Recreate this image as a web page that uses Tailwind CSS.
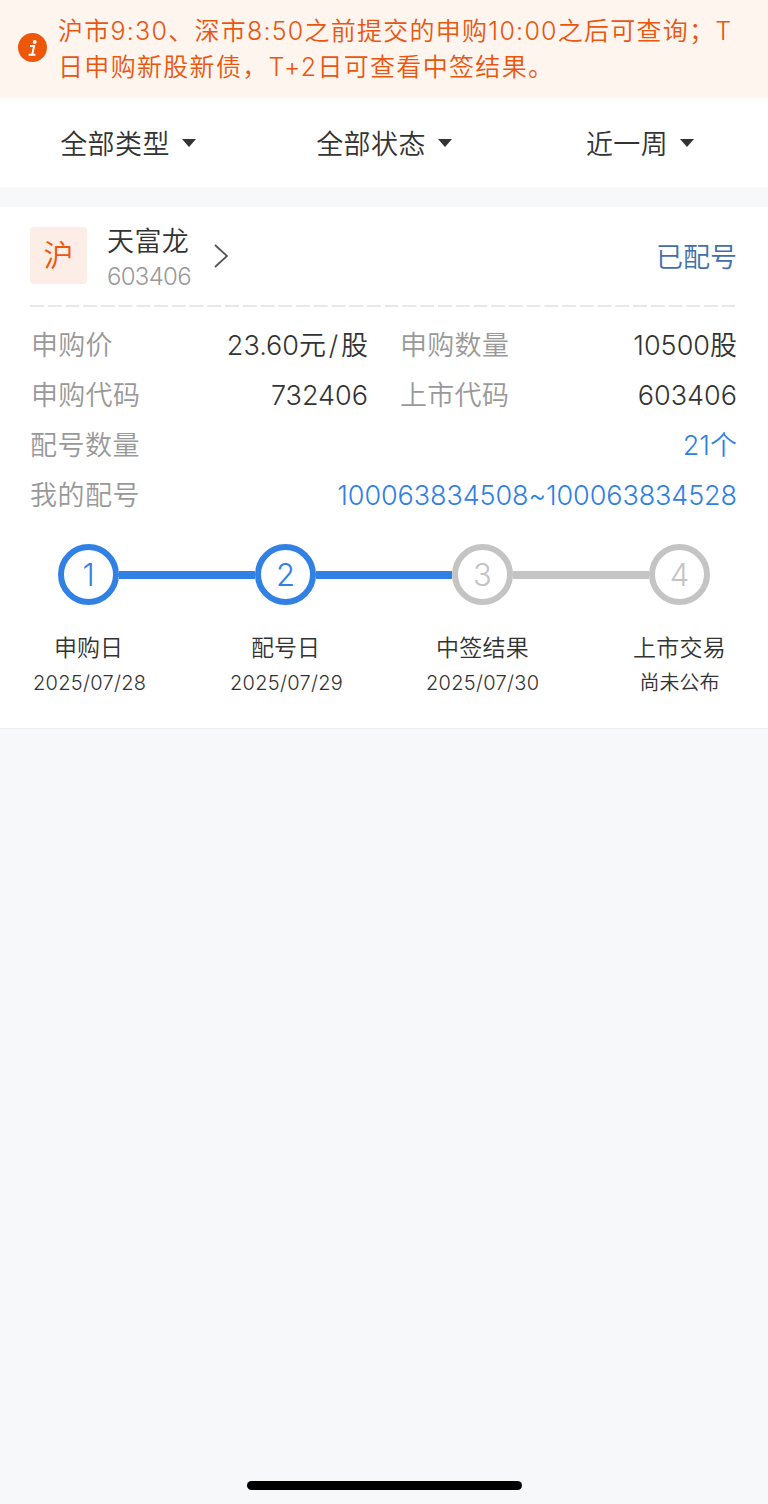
<!DOCTYPE html>
<html lang="zh-CN">
<head>
    <meta charset="UTF-8">
    <meta name="viewport" content="width=device-width, initial-scale=1.0">
    <title>申购查询</title>
    <script src="https://cdn.jsdelivr.net/npm/@tailwindcss/browser@4"></script>
    <style>
        body { font-family: Inter, 'Noto Sans CJK SC', sans-serif; }
    </style>
</head>
<body class="bg-[#f7f8fa] text-[#333333] font-[350] min-h-screen flex flex-col whitespace-nowrap">

    <!-- Aviso -->
    <div class="h-[98px] bg-[#fff5ef] text-[#e9560f] flex pl-[18px]">
        <svg class="w-[29px] h-[29px] mt-[33px] shrink-0" viewBox="0 0 29 29">
            <circle cx="14.5" cy="14.5" r="14.5" fill="#ee560a"/>
            <circle cx="16.7" cy="9" r="2" fill="#fff"/>
            <path d="M12 13h4.1l-1.9 8.6M10.6 21.7h6.8" fill="none" stroke="#fff" stroke-width="2"/>
        </svg>
        <div class="ml-[11px] mt-[13px] text-[25px] leading-[36px]">
            <p class="tracking-[1.25px]">沪市9:30、深市8:50之前提交的申购10:00之后可查询；T</p>
            <p class="tracking-[1.32px]">日申购新股新债，T+2日可查看中签结果。</p>
        </div>
    </div>

    <!-- Filtros -->
    <div class="h-[89px] bg-white grid grid-cols-3 text-[27px] leading-[40px]">
        <button class="flex items-center justify-center gap-3">
            <span class="tracking-[0.4px] pt-1">全部类型</span>
            <svg class="w-[14px] h-2" viewBox="0 0 14 8"><path d="M0 0h14L7 8z" fill="#333"/></svg>
        </button>
        <button class="flex items-center justify-center gap-3">
            <span class="tracking-[0.4px] pt-1">全部状态</span>
            <svg class="w-[14px] h-2" viewBox="0 0 14 8"><path d="M0 0h14L7 8z" fill="#333"/></svg>
        </button>
        <button class="flex items-center justify-center gap-3">
            <span class="tracking-[0.4px] pt-1">近一周</span>
            <svg class="w-[14px] h-2" viewBox="0 0 14 8"><path d="M0 0h14L7 8z" fill="#333"/></svg>
        </button>
    </div>

    <!-- Tarjeta -->
    <div class="mt-5 h-[522px] bg-white border-b border-[#eeeeee]">
        <div class="h-[98px] px-[30px] flex items-center">
            <div class="w-[57px] h-[57px] -mt-0.5 rounded bg-[#fceee6] text-[#ee560a] text-[30px] flex items-center justify-center">沪</div>
            <div class="ml-5 pt-[5px]">
                <div class="text-[27px] leading-[36px] tracking-[0.4px]">天富龙</div>
                <div class="text-[24px] leading-[34px] tracking-[-0.7px] text-[#999999]">603406</div>
            </div>
            <svg class="ml-[23px] w-[14px] h-6" viewBox="0 0 14 24"><path d="M1 1l12 11L1 23" fill="none" stroke="#555" stroke-width="1.8"/></svg>
            <div class="ml-auto mr-px pt-1 text-[27px] text-[#416ead]">已配号</div>
        </div>
        <svg class="ml-[30px] w-[705px] h-[2px]" viewBox="0 0 705 2"><path d="M0 1h705" stroke="#e8e8e8" stroke-width="2" stroke-dasharray="13.8 3.94"/></svg>

        <div class="mt-[14px] px-[31px] text-[27px] leading-[50px]">
            <div class="flex gap-8">
                <div class="flex-1 flex justify-between">
                    <span class="text-[#999999] tracking-[0.3px]">申购价</span><span>23.60元<span class="inline-block w-[15px] text-center">/</span>股</span>
                </div>
                <div class="flex-1 flex justify-between">
                    <span class="text-[#999999] tracking-[0.3px]">申购数量</span><span>10500股</span>
                </div>
            </div>
            <div class="flex gap-8">
                <div class="flex-1 flex justify-between">
                    <span class="text-[#999999] tracking-[0.3px]">申购代码</span><span>732406</span>
                </div>
                <div class="flex-1 flex justify-between">
                    <span class="text-[#999999] tracking-[0.3px]">上市代码</span><span>603406</span>
                </div>
            </div>
            <div class="flex justify-between">
                <span class="-ml-px text-[#999999] tracking-[0.5px]">配号数量</span><span class="text-[#3180e3]">21个</span>
            </div>
            <div class="flex justify-between">
                <span class="-ml-px text-[#999999] tracking-[0.5px]">我的配号</span><span class="text-[#3180e3] tracking-[-0.1px]">100063834508~100063834528</span>
            </div>
        </div>

        <!-- Pasos -->
        <div class="mt-[23px] px-[58px] flex items-center text-[31px] font-light text-[#c4c4c4]">
            <div class="w-[61px] h-[61px] pt-0.5 rounded-full border-6 border-[#3180e3] text-[#3180e3] flex items-center justify-center">1</div>
            <div class="flex-1 h-2 bg-[#3180e3]"></div>
            <div class="w-[61px] h-[61px] pt-0.5 rounded-full border-6 border-[#3180e3] text-[#3180e3] flex items-center justify-center">2</div>
            <div class="flex-1 h-2 bg-[#3180e3]"></div>
            <div class="w-[61px] h-[61px] pt-0.5 rounded-full border-6 border-[#c4c4c4] flex items-center justify-center">3</div>
            <div class="flex-1 h-2 bg-[#c4c4c4]"></div>
            <div class="w-[61px] h-[61px] pt-0.5 rounded-full border-6 border-[#c4c4c4] flex items-center justify-center">4</div>
        </div>
        <div class="mt-[25px] px-8 flex justify-between text-center text-[20px] leading-[34px]">
            <div class="w-[113px]">
                <div class="text-[23px] leading-[36px]">申购日</div>
                <div class="pl-px tracking-[0.3px]">2025/07/28</div>
            </div>
            <div class="w-[113px]">
                <div class="text-[23px] leading-[36px]">配号日</div>
                <div class="pl-px tracking-[0.3px]">2025/07/29</div>
            </div>
            <div class="w-[113px]">
                <div class="text-[23px] leading-[36px] tracking-[0.3px]">中签结果</div>
                <div class="tracking-[0.3px]">2025/07/30</div>
            </div>
            <div class="w-[113px]">
                <div class="text-[23px] leading-[36px] tracking-[0.3px]">上市交易</div>
                <div>尚未公布</div>
            </div>
        </div>
    </div>

    <div class="mt-auto mb-[14px] mx-auto w-[275px] h-[9px] rounded-full bg-black"></div>

</body>
</html>
